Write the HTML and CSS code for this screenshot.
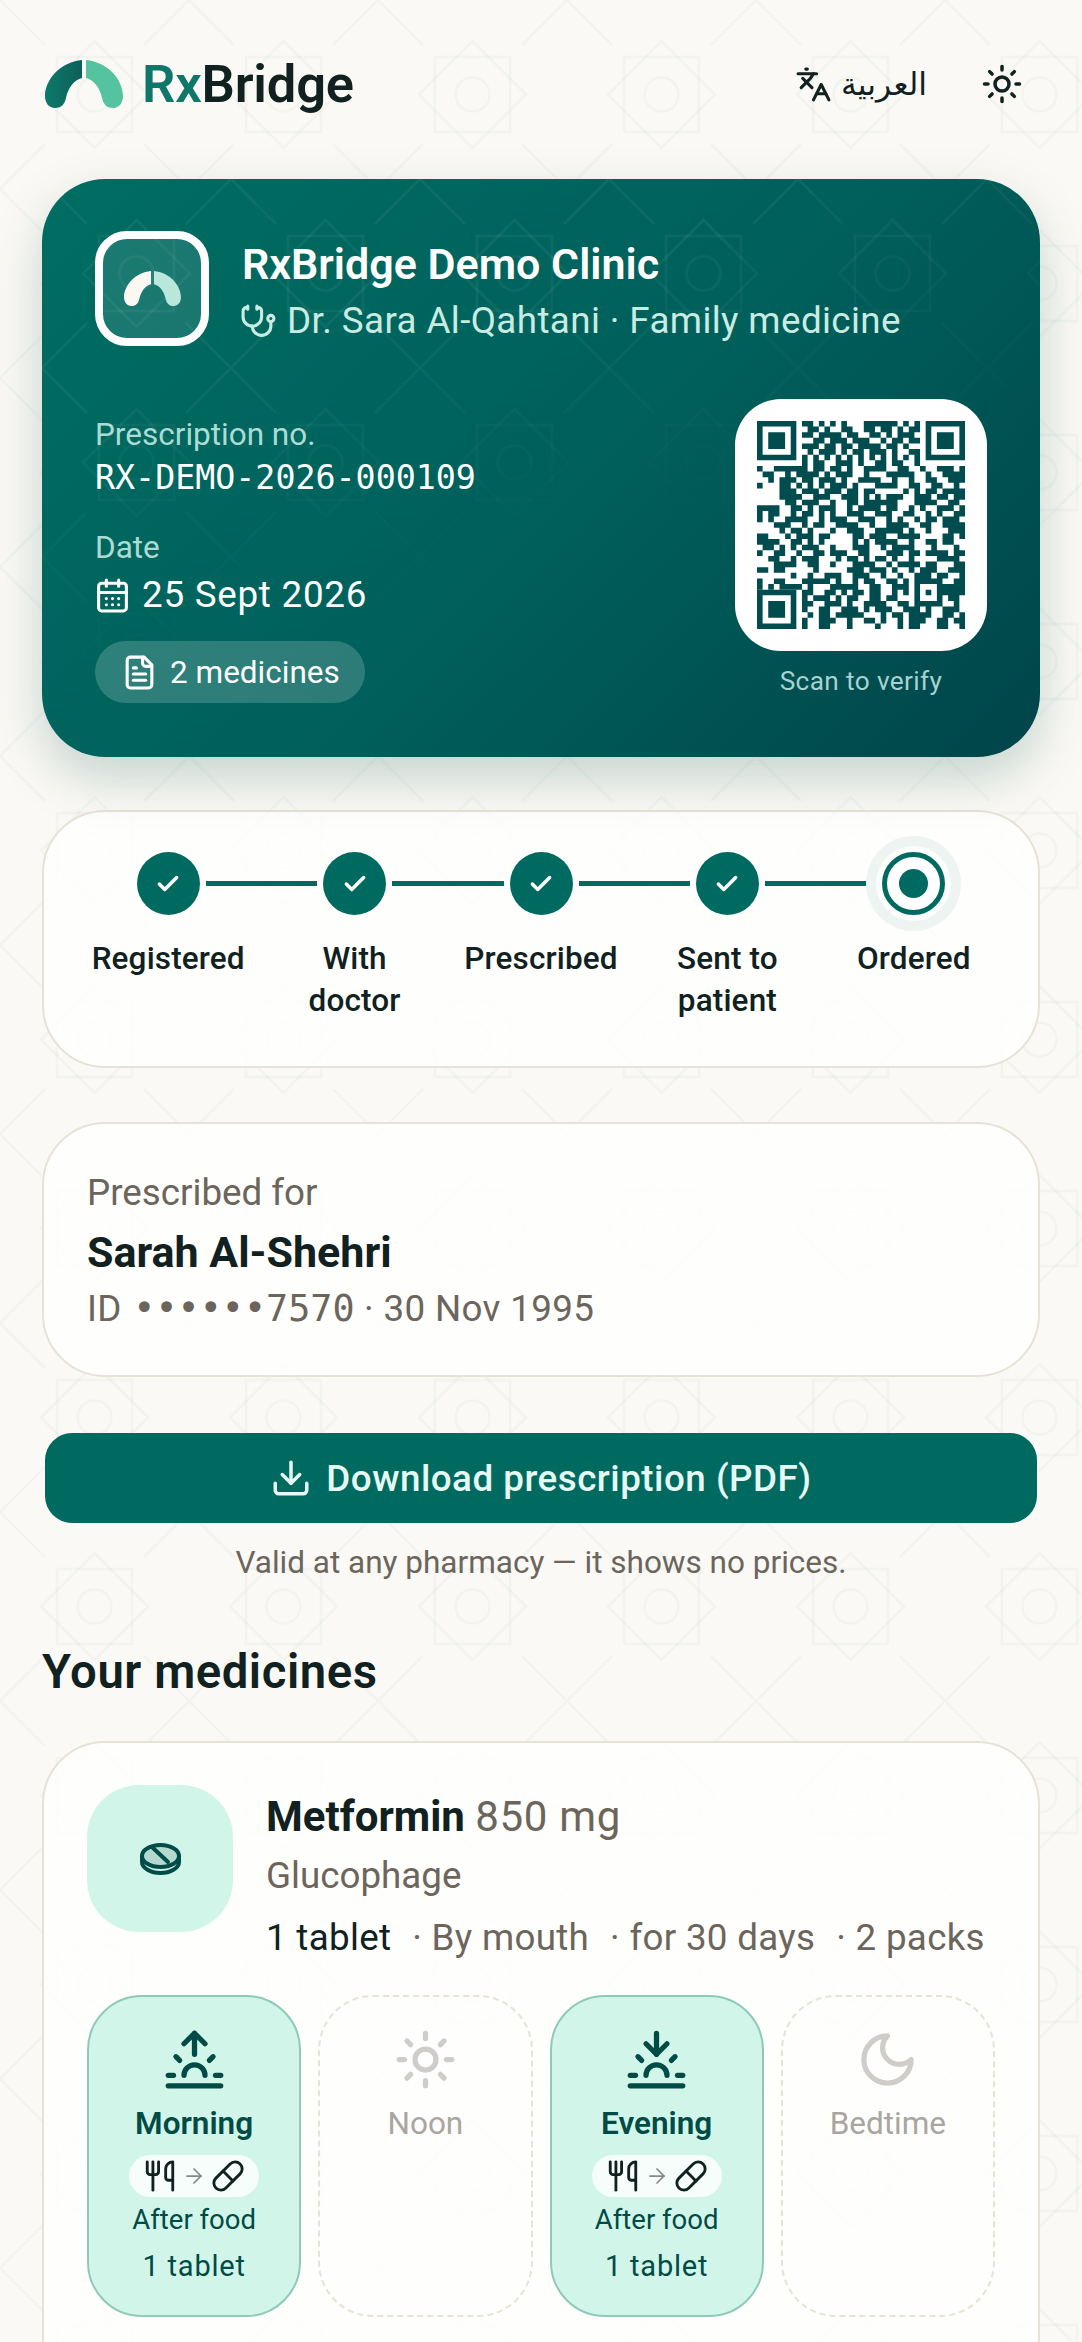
FILE: index.html
```html
<!DOCTYPE html>
<html>
<head>
	<title>RxBridge</title>
	<meta charset="utf-8">
	<link rel="stylesheet" href="styles.css">
</head>
<body>
	<div class="page">
		<header class="topbar">
			<a class="brand">
				<svg class="brand-mark" viewBox="0 0 78 48">
					<defs>
						<linearGradient id="arch" x1="0" y1="0" x2="1" y2="0">
							<stop offset="0" stop-color="#0b7a69"/>
							<stop offset="1" stop-color="#0f5f5a"/>
						</linearGradient>
					</defs>
					<path fill="url(#arch)" d="M37 0C15 2 0 20 0 36C0 43 4 48 10 48C17 48 20 43 21 38C23 28 29 20 37 18Z"/>
					<path fill="#55c2a0" d="M41 0C63 2 78 20 78 36C78 43 74 48 68 48C61 48 58 43 57 38C55 28 49 20 41 18Z"/>
				</svg>
				<span class="brand-name"><span class="brand-rx">Rx</span>Bridge</span>
			</a>
			<div class="topbar-actions">
				<span class="lang">
					<svg class="icon icon-lang" viewBox="0 0 24 24"><path d="m5 8 6 6"/><path d="m4 14 6-6 2-3"/><path d="M2 5h12"/><path d="M7 2h1"/><path d="m22 22-5-10-5 10"/><path d="M14 18h6"/></svg>
					<span class="lang-name" lang="ar">العربية</span>
				</span>
				<svg class="icon icon-sun" viewBox="0 0 24 24"><circle cx="12" cy="12" r="4"/><path d="M12 2v2"/><path d="M12 20v2"/><path d="m4.93 4.93 1.41 1.41"/><path d="m17.66 17.66 1.41 1.41"/><path d="M2 12h2"/><path d="M20 12h2"/><path d="m6.34 17.66-1.41 1.41"/><path d="m19.07 4.93-1.41 1.41"/></svg>
			</div>
		</header>

		<section class="hero">
			<div class="clinic">
				<div class="clinic-logo">
					<svg class="clinic-mark" viewBox="0 0 78 48">
						<path fill="#fbf8f1" d="M37 0C15 2 0 20 0 36C0 43 4 48 10 48C17 48 20 43 21 38C23 28 29 20 37 18Z"/>
						<path fill="#b9e8da" d="M41 0C63 2 78 20 78 36C78 43 74 48 68 48C61 48 58 43 57 38C55 28 49 20 41 18Z"/>
					</svg>
				</div>
				<div class="clinic-text">
					<div class="clinic-name">RxBridge Demo Clinic</div>
					<div class="clinic-doctor">
						<svg class="icon icon-md" viewBox="0 0 24 24"><path d="M11 2v2"/><path d="M5 2v2"/><path d="M5 3H4a2 2 0 0 0-2 2v4a6 6 0 0 0 12 0V5a2 2 0 0 0-2-2h-1"/><path d="M8 15a6 6 0 0 0 12 0v-3"/><circle cx="20" cy="10" r="2"/></svg>
						<span>Dr. Sara Al-Qahtani · Family medicine</span>
					</div>
				</div>
			</div>
			<div class="rx-details">
				<div class="rx-info">
					<div class="rx-label">Prescription no.</div>
					<div class="rx-number">RX-DEMO-2026-000109</div>
					<div class="rx-label rx-label-date">Date</div>
					<div class="rx-date">
						<svg class="icon icon-md" viewBox="0 0 24 24"><path d="M8 2v4"/><path d="M16 2v4"/><rect x="3" y="4" width="18" height="18" rx="2"/><path d="M3 10h18"/><path d="M8 14h.01"/><path d="M12 14h.01"/><path d="M16 14h.01"/><path d="M8 18h.01"/><path d="M12 18h.01"/><path d="M16 18h.01"/></svg>
						<span>25 Sept 2026</span>
					</div>
					<div class="rx-chip">
						<svg class="icon icon-md" viewBox="0 0 24 24"><path d="M15 2H6a2 2 0 0 0-2 2v16a2 2 0 0 0 2 2h12a2 2 0 0 0 2-2V7Z"/><path d="M14 2v4a2 2 0 0 0 2 2h4"/><path d="M10 9H8"/><path d="M16 13H8"/><path d="M16 17H8"/></svg>
						<span>2 medicines</span>
					</div>
				</div>
				<div class="qr-block">
					<div class="qr-card">
						<svg class="qr" viewBox="0 0 37 37">
							<path class="qr-finder" fill-rule="evenodd" d="M0 0h7v7h-7zM1 1v5h5v-5zM2 2h3v3h-3zM30 0h7v7h-7zM31 1v5h5v-5zM32 2h3v3h-3zM0 30h7v7h-7zM1 31v5h5v-5zM2 32h3v3h-3z"/>
							<path class="qr-data" d="M8 .5h2m1 0h1m1 0h1m1 0h1m3 0h6m1 0h1m1 0h1M9 1.5h2m1 0h1m2 0h2m2 0h2m1 0h2m1 0h1m1 0h2M8 2.5h2m1 0h4m1 0h2m2 0h2m1 0h1m1 0h3M10 3.5h2m1 0h3m1 0h3m2 0h1m1 0h2m1 0h2M8 4.5h3m1 0h2m1 0h2m1 0h4m1 0h2m1 0h1M9 5.5h1m1 0h3m1 0h1m1 0h2m1 0h3m1 0h1m2 0h2M8 6.5h1m1 0h1m1 0h1m1 0h1m1 0h1m1 0h1m1 0h1m1 0h1m1 0h1m1 0h1m1 0h1M8 7.5h1m1 0h2m2 0h3m1 0h1m2 0h2m1 0h2m2 0h1M0 8.5h1m2 0h6m1 0h2m1 0h2m1 0h1m2 0h4m2 0h2m2 0h1m2 0h3m1 0h1M1 9.5h2m2 0h1m1 0h4m1 0h1m1 0h3m2 0h1m3 0h5m2 0h1m2 0h4M2 10.5h1m1 0h3m1 0h2m1 0h3m1 0h1m2 0h4m2 0h1m2 0h1m2 0h2m2 0h3M0 11.5h1m3 0h2m1 0h1m1 0h1m1 0h1m1 0h3m1 0h1m3 0h4m2 0h2m2 0h2m2 0h1M4 12.5h3m1 0h3m1 0h3m1 0h2m1 0h2m5 0h1m1 0h1m1 0h2m1 0h4M4 13.5h4m2 0h3m2 0h3m1 0h1m1 0h1m1 0h3m2 0h3m1 0h2m1 0h2M5 14.5h2m1 0h3m2 0h1m2 0h2m1 0h6m3 0h4m2 0h2M0 15.5h4m2 0h2m1 0h1m1 0h3m2 0h1m1 0h4m1 0h2m2 0h1m1 0h1m2 0h3m1 0h1M0 16.5h1m1 0h2m2 0h1m1 0h2m1 0h1m1 0h1m2 0h3m2 0h3m2 0h2m2 0h1m1 0h1m2 0h2M0 17.5h1m1 0h1m2 0h4m2 0h1m1 0h3m2 0h3m2 0h1m1 0h1m2 0h1m1 0h2m1 0h3M3 18.5h3m2 0h1m1 0h2m2 0h4m2 0h1m2 0h4m2 0h2m2 0h4M4 19.5h1m1 0h2m1 0h1m3 0h1m2 0h3m2 0h5m1 0h1m2 0h1m3 0h3M0 20.5h2m3 0h1m1 0h3m1 0h2m4 0h2m1 0h3m2 0h4m4 0h2m1 0h1M0 21.5h4m2 0h2m1 0h1m1 0h1m5 0h1m1 0h1m1 0h4m2 0h1m2 0h2m1 0h2M1 22.5h2m1 0h1m1 0h1m1 0h3m2 0h1m3 0h3m2 0h1m1 0h4m3 0h1m3 0h1M0 23.5h1m2 0h2m2 0h1m2 0h2m1 0h3m2 0h2m3 0h3m1 0h2m1 0h4m1 0h2M2 24.5h2m2 0h1m1 0h3m3 0h1m1 0h2m1 0h1m1 0h2m1 0h1m2 0h1m4 0h4M3 25.5h4m2 0h2m2 0h1m3 0h4m2 0h1m1 0h4m1 0h2m3 0h2M0 26.5h2m1 0h2m5 0h1m5 0h3m1 0h3m1 0h1m2 0h1m1 0h3m2 0h3M6 27.5h1m2 0h1m2 0h3m2 0h3m2 0h1m2 0h1m2 0h3m1 0h2m2 0h1M0 28.5h1m2 0h2m3 0h5m1 0h1m2 0h1m1 0h2m2 0h2m1 0h1m1 0h5m2 0h2M0 29.5h1m1 0h1m1 0h4m1 0h1m3 0h5m2 0h2m2 0h3m1 0h1m3 0h5M8 30.5h2m2 0h2m1 0h1m1 0h2m1 0h2m2 0h1m1 0h1m1 0h1m1 0h1m1 0h5M8 31.5h1m1 0h3m1 0h1m1 0h2m2 0h2m1 0h2m3 0h1m3 0h1m1 0h2M8 32.5h2m2 0h3m1 0h1m2 0h4m2 0h2m1 0h5m2 0h1M8 33.5h1m2 0h2m2 0h3m1 0h1m1 0h3m2 0h3m1 0h1m2 0h3M9 34.5h1m1 0h2m1 0h5m3 0h1m1 0h2m1 0h4m2 0h2m1 0h1M8 35.5h1m2 0h3m2 0h1m2 0h2m1 0h1m2 0h1m1 0h3m2 0h2m1 0h2M8 36.5h1m2 0h2m3 0h1m4 0h1m3 0h1m1 0h2m3 0h2m2 0h1"/>
						</svg>
					</div>
					<div class="qr-caption">Scan to verify</div>
				</div>
			</div>
		</section>

		<section class="card progress">
			<div class="step">
				<div class="step-track">
					<span class="step-line step-line-none"></span>
					<span class="step-dot"><svg class="icon icon-check" viewBox="0 0 24 24"><path d="M20 6 9 17l-5-5"/></svg></span>
					<span class="step-line"></span>
				</div>
				<div class="step-label">Registered</div>
			</div>
			<div class="step">
				<div class="step-track">
					<span class="step-line"></span>
					<span class="step-dot"><svg class="icon icon-check" viewBox="0 0 24 24"><path d="M20 6 9 17l-5-5"/></svg></span>
					<span class="step-line"></span>
				</div>
				<div class="step-label">With<br>doctor</div>
			</div>
			<div class="step">
				<div class="step-track">
					<span class="step-line"></span>
					<span class="step-dot"><svg class="icon icon-check" viewBox="0 0 24 24"><path d="M20 6 9 17l-5-5"/></svg></span>
					<span class="step-line"></span>
				</div>
				<div class="step-label">Prescribed</div>
			</div>
			<div class="step">
				<div class="step-track">
					<span class="step-line"></span>
					<span class="step-dot"><svg class="icon icon-check" viewBox="0 0 24 24"><path d="M20 6 9 17l-5-5"/></svg></span>
					<span class="step-line"></span>
				</div>
				<div class="step-label">Sent to<br>patient</div>
			</div>
			<div class="step">
				<div class="step-track">
					<span class="step-line"></span>
					<span class="step-dot step-dot-active"><span class="step-core"></span></span>
					<span class="step-line step-line-none"></span>
				</div>
				<div class="step-label">Ordered</div>
			</div>
		</section>

		<section class="card patient">
			<div class="patient-label">Prescribed for</div>
			<div class="patient-name">Sarah Al-Shehri</div>
			<div class="patient-meta">ID <span class="mono">••••••7570</span> · 30 Nov 1995</div>
		</section>

		<button class="download">
			<svg class="icon icon-download" viewBox="0 0 24 24"><path d="M21 15v4a2 2 0 0 1-2 2H5a2 2 0 0 1-2-2v-4"/><path d="m7 10 5 5 5-5"/><path d="M12 15V3"/></svg>
			<span>Download prescription (PDF)</span>
		</button>
		<p class="download-note">Valid at any pharmacy — it shows no prices.</p>

		<h2 class="section-title">Your medicines</h2>

		<section class="card medicine">
			<div class="med-head">
				<div class="med-thumb">
					<svg class="med-tablet" viewBox="0 0 41 32">
						<ellipse class="tablet-top" cx="20.5" cy="13" rx="18.5" ry="11"/>
						<path class="tablet-edge" d="M2 13v6c0 6 8.5 11 18.5 11s18.5-5 18.5-11v-6"/>
						<path class="tablet-edge" d="M13 5l15 14"/>
					</svg>
				</div>
				<div class="med-text">
					<div class="med-name"><strong>Metformin</strong> <span class="med-strength">850 mg</span></div>
					<div class="med-brand">Glucophage</div>
					<div class="med-facts">
						<span class="med-dose">1 tablet</span>
						<span>· By mouth</span>
						<span>· for 30 days</span>
						<span>· 2 packs</span>
					</div>
				</div>
			</div>
			<div class="slots">
				<div class="slot slot-on">
					<svg class="icon icon-slot" viewBox="0 0 24 24"><path d="M12 2v8"/><path d="m4.93 10.93 1.41 1.41"/><path d="M2 18h2"/><path d="M20 18h2"/><path d="m19.07 10.93-1.41 1.41"/><path d="M22 22H2"/><path d="m8 6 4-4 4 4"/><path d="M16 18a4 4 0 0 0-8 0"/></svg>
					<div class="slot-name">Morning</div>
					<div class="food-chip">
						<svg class="icon icon-food" viewBox="0 0 24 24"><path d="M3 2v7c0 1.100.9 2 2 2h4a2 2 0 0 0 2-2V2"/><path d="M7 2v20"/><path d="M21 15V2a5 5 0 0 0-5 5v6c0 1.100.9 2 2 2h3Zm0 0v7"/></svg>
						<svg class="icon icon-arrow" viewBox="0 0 24 24"><path d="M5 12h14"/><path d="m12 5 7 7-7 7"/></svg>
						<svg class="icon icon-food" viewBox="0 0 24 24"><path d="m10.500 20.500 10-10a4.950 4.950 0 1 0-7-7l-10 10a4.950 4.950 0 1 0 7 7Z"/><path d="m8.500 8.500 7 7"/></svg>
					</div>
					<div class="slot-note">After food</div>
					<div class="slot-dose">1 tablet</div>
				</div>
				<div class="slot">
					<svg class="icon icon-slot" viewBox="0 0 24 24"><circle cx="12" cy="12" r="4"/><path d="M12 2v2"/><path d="M12 20v2"/><path d="m4.93 4.93 1.41 1.41"/><path d="m17.66 17.66 1.41 1.41"/><path d="M2 12h2"/><path d="M20 12h2"/><path d="m6.34 17.66-1.41 1.41"/><path d="m19.07 4.93-1.41 1.41"/></svg>
					<div class="slot-name">Noon</div>
				</div>
				<div class="slot slot-on">
					<svg class="icon icon-slot" viewBox="0 0 24 24"><path d="M12 10V2"/><path d="m4.93 10.93 1.41 1.41"/><path d="M2 18h2"/><path d="M20 18h2"/><path d="m19.07 10.93-1.41 1.41"/><path d="M22 22H2"/><path d="m16 6-4 4-4-4"/><path d="M16 18a4 4 0 0 0-8 0"/></svg>
					<div class="slot-name">Evening</div>
					<div class="food-chip">
						<svg class="icon icon-food" viewBox="0 0 24 24"><path d="M3 2v7c0 1.100.9 2 2 2h4a2 2 0 0 0 2-2V2"/><path d="M7 2v20"/><path d="M21 15V2a5 5 0 0 0-5 5v6c0 1.100.9 2 2 2h3Zm0 0v7"/></svg>
						<svg class="icon icon-arrow" viewBox="0 0 24 24"><path d="M5 12h14"/><path d="m12 5 7 7-7 7"/></svg>
						<svg class="icon icon-food" viewBox="0 0 24 24"><path d="m10.500 20.500 10-10a4.950 4.950 0 1 0-7-7l-10 10a4.950 4.950 0 1 0 7 7Z"/><path d="m8.500 8.500 7 7"/></svg>
					</div>
					<div class="slot-note">After food</div>
					<div class="slot-dose">1 tablet</div>
				</div>
				<div class="slot">
					<svg class="icon icon-slot" viewBox="0 0 24 24"><path d="M12 3a6 6 0 0 0 9 9 9 9 0 1 1-9-9Z"/></svg>
					<div class="slot-name">Bedtime</div>
				</div>
			</div>
		</section>
	</div>
</body>
</html>
```

FILE: styles.css
```css
* {
	box-sizing: border-box;
}

html, body {
	margin: 0;
	height: 2342px;
	overflow: hidden;
}

body {
	font-family: Roboto, "Noto Sans", sans-serif;
	color: #10211f;
	background-color: #fbf9f5;
	background-image: url("data:image/svg+xml,%3Csvg xmlns='http://www.w3.org/2000/svg' width='189' height='189'%3E%3Cg fill='none' stroke='%23006a60' stroke-opacity='.03' stroke-width='2.6'%3E%3Cpath d='M0 0l45 45M189 0l-45 45M0 189l45-45M189 189l-45-45'/%3E%3Crect x='57' y='57' width='75' height='75'/%3E%3Cpath d='M94.500 41l53.500 53.500-53.500 53.500-53.500-53.500z'/%3E%3Ccircle cx='94.500' cy='94.500' r='17'/%3E%3C/g%3E%3C/svg%3E");
	background-size: 189px 189px;
}

.page {
	padding: 0 42px;
}

.icon {
	fill: none;
	stroke: currentColor;
	stroke-width: 2;
	stroke-linecap: round;
	stroke-linejoin: round;
	flex-shrink: 0;
}

.icon-md {
	width: 37px;
	height: 37px;
}

/* top bar */
.topbar {
	height: 168px;
	margin-bottom: 11px;
	padding: 0 17px 0 3px;
	display: flex;
	align-items: center;
	justify-content: space-between;
}

.brand {
	display: flex;
	align-items: center;
	gap: 19px;
}

.brand-mark {
	width: 78px;
	height: 48px;
}

.brand-name {
	font-size: 52.500px;
	font-weight: 600;
	letter-spacing: -0.2px;
	color: #10211f;
}

.brand-rx {
	color: #0f766a;
}

.topbar-actions {
	display: flex;
	align-items: center;
	gap: 54px;
}

.lang {
	display: flex;
	align-items: center;
	gap: 9px;
}

.icon-lang {
	width: 37px;
	height: 37px;
}

.lang-name {
	font-family: "DejaVu Sans", sans-serif;
	font-size: 31.500px;
}

.icon-sun {
	width: 42px;
	height: 42px;
}

/* hero */
.hero {
	position: relative;
	height: 578px;
	padding: 52px 53px 54px;
	border-radius: 63px;
	color: #fff;
	background: linear-gradient(135deg, #006d62 0%, #005f5b 55%, #00444a 100%);
	box-shadow: 0 21px 52px rgba(0, 80, 72, 0.22);
	overflow: hidden;
}

.hero::before {
	content: "";
	position: absolute;
	inset: 0;
	background-image: url("data:image/svg+xml,%3Csvg xmlns='http://www.w3.org/2000/svg' width='189' height='189'%3E%3Cg fill='none' stroke='%23fff' stroke-opacity='.05' stroke-width='2.6'%3E%3Cpath d='M0 0l45 45M189 0l-45 45M0 189l45-45M189 189l-45-45'/%3E%3Crect x='57' y='57' width='75' height='75'/%3E%3Cpath d='M94.500 41l53.500 53.500-53.500 53.500-53.500-53.500z'/%3E%3Ccircle cx='94.500' cy='94.500' r='17'/%3E%3C/g%3E%3C/svg%3E");
	background-size: 189px 189px;
	-webkit-mask-image: linear-gradient(165deg, #000 25%, transparent 62%);
	mask-image: linear-gradient(165deg, #000 25%, transparent 62%);
}

.clinic, .rx-details {
	position: relative;
}

.clinic {
	height: 115px;
	display: flex;
	align-items: flex-start;
	gap: 33px;
}

.clinic-logo {
	width: 114px;
	height: 115px;
	border: 8px solid #fff;
	border-radius: 32px;
	background: rgba(255, 255, 255, 0.1);
	display: flex;
	align-items: center;
	justify-content: center;
}

.clinic-mark {
	width: 57px;
	height: 35px;
}

.clinic-text {
	padding-top: 8px;
}

.clinic-name {
	font-size: 43px;
	font-weight: 600;
	line-height: 50px;
}

.clinic-doctor {
	margin-top: 7px;
	display: flex;
	align-items: center;
	gap: 10px;
	font-size: 36.750px;
	letter-spacing: 0.4px;
	line-height: 50px;
	color: #c9ece2;
}

.clinic-doctor .icon {
	margin-left: -2px;
}

.rx-details {
	margin-top: 53px;
	display: flex;
	justify-content: space-between;
}

.rx-info {
	padding-top: 15px;
}

.rx-label {
	font-size: 31.500px;
	line-height: 42px;
	color: #abdcd3;
}

.rx-label-date {
	margin-top: 28.500px;
}

.rx-number {
	margin-top: 0.500px;
	font-family: "DejaVu Sans Mono", monospace;
	font-size: 33.300px;
	line-height: 42px;
}

.rx-date {
	margin-top: 2px;
	display: flex;
	align-items: center;
	gap: 11px;
	font-size: 36.750px;
	letter-spacing: 0.75px;
	line-height: 48px;
}

.rx-date .icon {
	margin-left: -1px;
}

.rx-chip {
	margin-top: 22px;
	width: 270px;
	height: 62px;
	padding-left: 26px;
	border-radius: 31px;
	background: rgba(255, 255, 255, 0.18);
	display: flex;
	align-items: center;
	gap: 12px;
	font-size: 31.500px;
}

.qr-block {
	width: 252px;
	display: flex;
	flex-direction: column;
	align-items: center;
}

.qr-card {
	width: 252px;
	height: 252px;
	padding: 22px;
	border-radius: 46px;
	background: #fff;
}

.qr {
	display: block;
	width: 208px;
	height: 208px;
}

.qr-finder {
	fill: #014c4e;
}

.qr-data {
	fill: none;
	stroke: #014c4e;
	stroke-width: 1;
}

.qr-caption {
	margin-top: 13px;
	font-size: 26.250px;
	letter-spacing: 0.35px;
	line-height: 34px;
	color: #a6d2cf;
}

/* cards */
.card {
	border: 2.600px solid #e6e2d8;
	border-radius: 63px;
	background: rgba(255, 255, 255, 0.8);
}

/* progress */
.progress {
	margin-top: 53px;
	height: 258px;
	padding: 40px 31px 0;
	display: grid;
	grid-template-columns: repeat(5, 1fr);
}

.step-track {
	display: flex;
	align-items: center;
	gap: 6px;
}

.step-line {
	flex: 1;
	height: 5px;
	background: #006a60;
}

.step-line-none {
	background: none;
}

.step-dot {
	width: 63px;
	height: 63px;
	border-radius: 50%;
	background: #006a60;
	color: #fff;
	display: flex;
	align-items: center;
	justify-content: center;
}

.step-dot-active {
	background: #fff;
	border: 5px solid #006a60;
	box-shadow: 0 0 0 6px #fdfdfb, 0 0 0 16px #eef4f2;
}

.step-core {
	width: 29px;
	height: 29px;
	border-radius: 50%;
	background: #006a60;
}

.icon-check {
	width: 26px;
	height: 26px;
	stroke-width: 3.200;
}

.step-label {
	margin-top: 23px;
	text-align: center;
	font-size: 31.500px;
	font-weight: 500;
	letter-spacing: 0.15px;
	line-height: 42px;
}

/* patient */
.patient {
	margin-top: 54px;
	height: 255px;
	padding: 44px 43px 0;
}

.patient-label {
	font-size: 36.750px;
	line-height: 50px;
	color: #6b655c;
}

.patient-name {
	margin-top: 7.500px;
	font-size: 43px;
	font-weight: 700;
	line-height: 52px;
}

.patient-meta {
	margin-top: 6.500px;
	font-size: 36.750px;
	letter-spacing: 0.35px;
	line-height: 50px;
	color: #6b655c;
}

.mono {
	margin-left: 2px;
	font-family: "DejaVu Sans Mono", monospace;
	font-size: 36.750px;
	letter-spacing: 0;
}

/* download */
.download {
	display: flex;
	align-items: center;
	justify-content: center;
	gap: 14px;
	width: 992px;
	height: 90px;
	margin: 56px 3px 0;
	border: 0;
	border-radius: 27px;
	background: #006a60;
	color: #e6faf5;
	font-family: inherit;
	font-size: 36.750px;
	font-weight: 500;
	letter-spacing: 0.5px;
}

.icon-download {
	width: 42px;
	height: 42px;
}

.download-note {
	margin: 19px 0 0;
	text-align: center;
	font-size: 31.500px;
	line-height: 42px;
	color: #6b655c;
}

.section-title {
	margin: 58px 0 0;
	font-size: 47.250px;
	font-weight: 600;
	letter-spacing: 0.55px;
	line-height: 60px;
}

/* medicine */
.medicine {
	margin-top: 38.500px;
	height: 700px;
	padding: 42.500px 43px;
}

.med-head {
	display: flex;
	gap: 33px;
}

.med-thumb {
	width: 146px;
	height: 147px;
	flex-shrink: 0;
	border-radius: 52px;
	background: #d2f5ea;
	display: flex;
	align-items: center;
	justify-content: center;
}

.med-tablet {
	width: 41px;
	height: 32px;
}

.tablet-top {
	fill: #b5d9cf;
	stroke: #014c47;
	stroke-width: 4;
}

.tablet-edge {
	fill: none;
	stroke: #014c47;
	stroke-width: 4;
	stroke-linecap: round;
}

.med-text {
	flex: 1;
	min-width: 0;
	padding-top: 6px;
}

.med-name {
	font-size: 42px;
	line-height: 52px;
	color: #6b655c;
}

.med-name strong {
	font-weight: 700;
	color: #10211f;
}

.med-strength {
	letter-spacing: 0.7px;
}

.med-brand {
	margin-top: 9px;
	font-size: 36.750px;
	line-height: 48px;
	color: #6b655c;
}

.med-facts {
	margin-top: 13.500px;
	display: flex;
	gap: 21px;
	font-size: 36.750px;
	letter-spacing: 0.3px;
	line-height: 48px;
	color: #6b655c;
	white-space: nowrap;
}

.med-dose {
	color: #10211f;
}

.slots {
	margin-top: 33px;
	display: grid;
	grid-template-columns: repeat(4, 1fr);
	gap: 17px;
}

.slot {
	height: 322px;
	padding-top: 31px;
	border: 2.600px dashed #e6e2d8;
	border-radius: 55px;
	color: #aaa5a0;
	display: flex;
	flex-direction: column;
	align-items: center;
}

.slot .icon-slot {
	color: #cfcdc9;
}

.slot-on {
	border: 2.600px solid #8fc9ba;
	background: #d2f5ea;
	color: #004b45;
}

.slot-on .icon-slot {
	color: #004b45;
}

.icon-slot {
	width: 63px;
	height: 63px;
}

.slot-name {
	margin-top: 12px;
	font-size: 31.500px;
	line-height: 42px;
}

.slot-on .slot-name {
	font-weight: 600;
}

.food-chip {
	margin-top: 10.500px;
	width: 130px;
	height: 42px;
	border-radius: 21px;
	background: rgba(255, 255, 255, 0.8);
	display: flex;
	align-items: center;
	justify-content: center;
	gap: 5px;
	color: #10211f;
}

.icon-food {
	width: 34px;
	height: 34px;
}

.icon-arrow {
	width: 24px;
	height: 24px;
	stroke-width: 1.750;
	color: #888;
}

.slot-note {
	margin-top: 4.500px;
	font-size: 27.500px;
	line-height: 36px;
}

.slot-dose {
	margin-top: 10.500px;
	font-size: 29px;
	letter-spacing: 0.8px;
	line-height: 36px;
}
```
